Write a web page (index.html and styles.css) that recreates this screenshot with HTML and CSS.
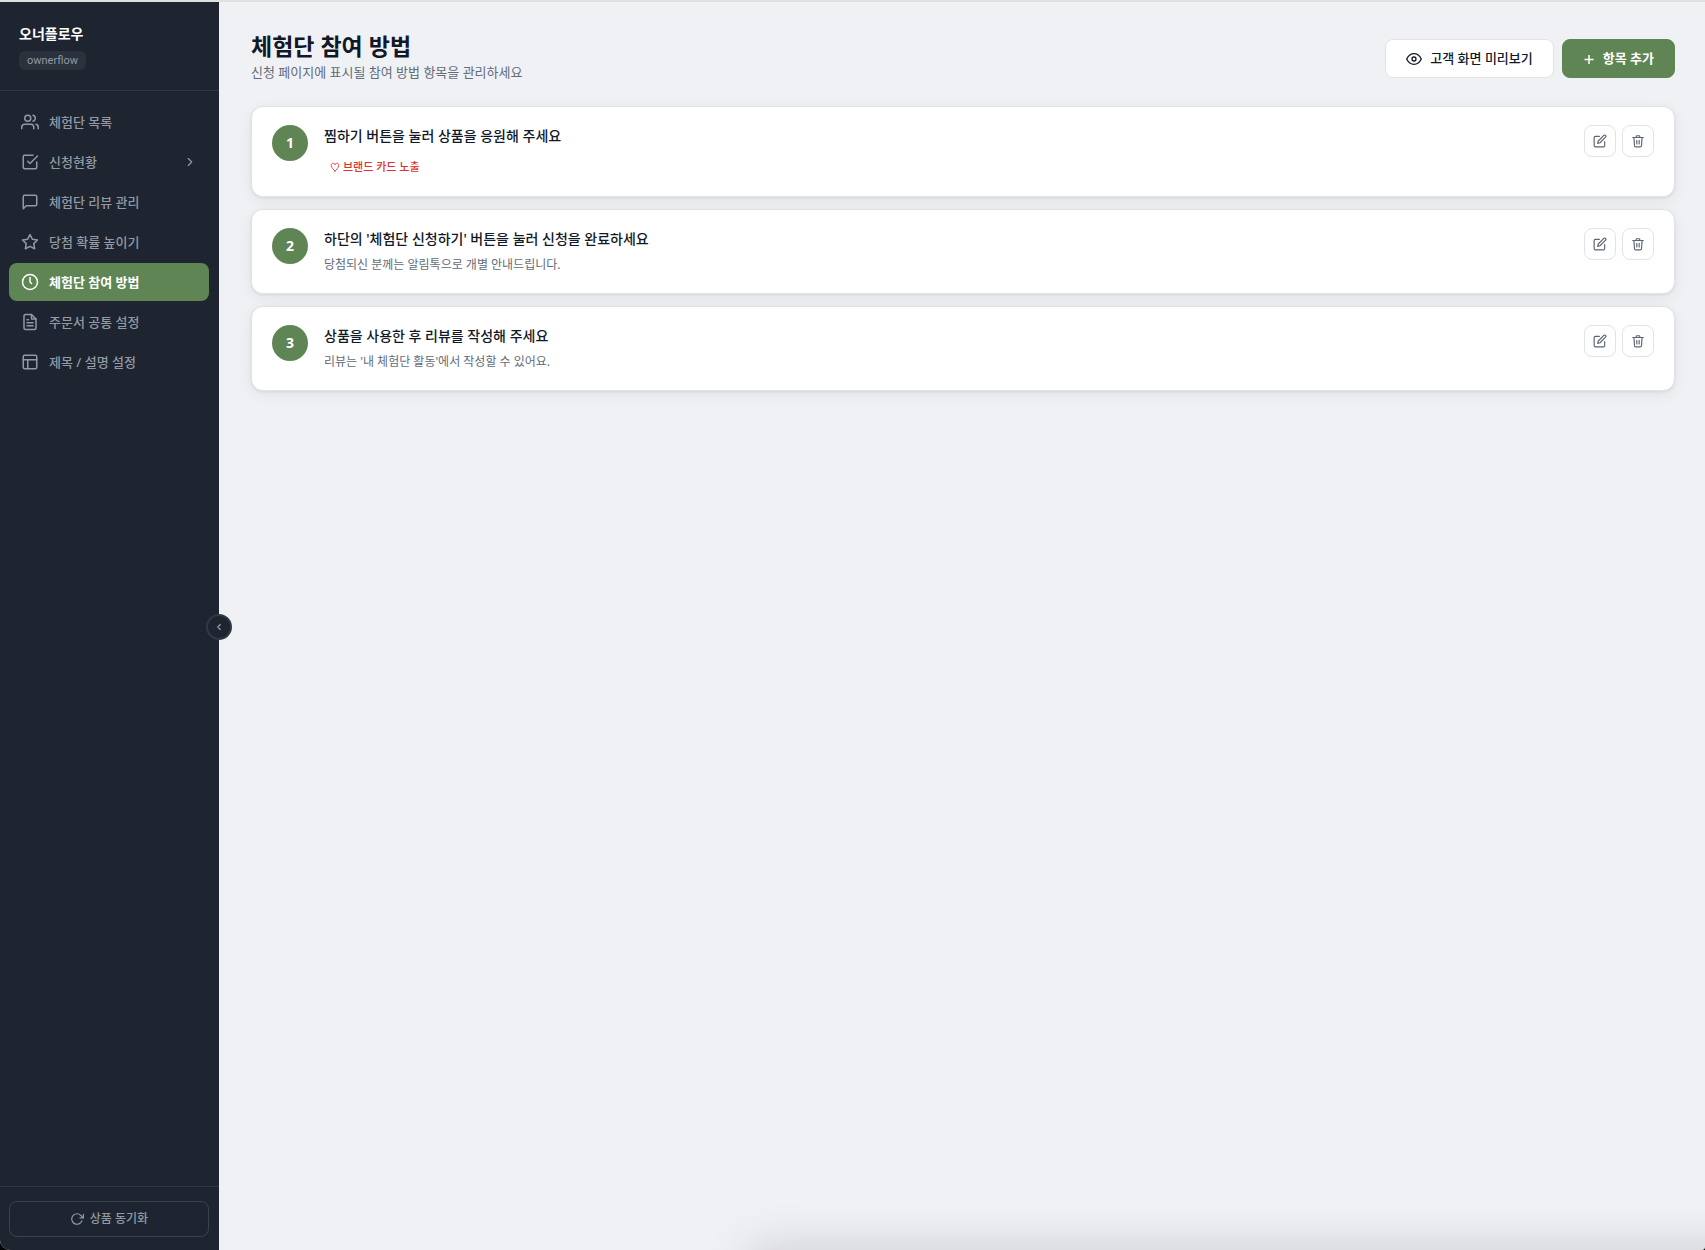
FILE: index.html
```html
<!DOCTYPE html>
<html lang="ko">
<head>
<meta charset="utf-8">
<meta name="viewport" content="width=device-width, initial-scale=1">
<title>체험단 참여 방법</title>
<link rel="stylesheet" href="styles.css">
</head>
<body>
<svg class="sprite" aria-hidden="true">
  <symbol id="i-edit" viewBox="0 0 24 24"><path d="M11 4H4a2 2 0 0 0-2 2v14a2 2 0 0 0 2 2h14a2 2 0 0 0 2-2v-7"/><path d="M18.500 2.500a2.121 2.121 0 0 1 3 3L12 15l-4 1 1-4 9.500-9.500z"/></symbol>
  <symbol id="i-trash" viewBox="0 0 24 24"><path d="M3 6h18M19 6l-1 14a2 2 0 0 1-2 2H8a2 2 0 0 1-2-2L5 6M10 11v6M14 11v6M9 6V4a1 1 0 0 1 1-1h4a1 1 0 0 1 1 1v2"/></symbol>
</svg>
<div class="app">
  <aside class="sidebar">
    <div class="brand">
      <strong class="brand-name">오너플로우</strong>
      <span class="brand-tag">ownerflow</span>
    </div>
    <nav class="nav">
      <a class="nav-item" href="#"><svg class="icon" viewBox="0 0 24 24"><path d="M17 21v-2a4 4 0 0 0-4-4H5a4 4 0 0 0-4 4v2"/><circle cx="9" cy="7" r="4"/><path d="M23 21v-2a4 4 0 0 0-3-3.870M16 3.130a4 4 0 0 1 0 7.750"/></svg><span class="label">체험단 목록</span></a>
      <a class="nav-item" href="#"><svg class="icon" viewBox="0 0 24 24"><path d="M9 11l3 3L22 4"/><path d="M21 12v7a2 2 0 0 1-2 2H5a2 2 0 0 1-2-2V5a2 2 0 0 1 2-2h11"/></svg><span class="label">신청현황</span><svg class="chevron" viewBox="0 0 24 24"><path d="M9 18l6-6-6-6"/></svg></a>
      <a class="nav-item" href="#"><svg class="icon" viewBox="0 0 24 24"><path d="M21 15a2 2 0 0 1-2 2H7l-4 4V5a2 2 0 0 1 2-2h14a2 2 0 0 1 2 2z"/></svg><span class="label">체험단 리뷰 관리</span></a>
      <a class="nav-item" href="#"><svg class="icon" viewBox="0 0 24 24"><path d="M12 2l3.090 6.260L22 9.270l-5 4.870 1.180 6.880L12 17.770l-6.180 3.250L7 14.140 2 9.270l6.910-1.010L12 2z"/></svg><span class="label">당첨 확률 높이기</span></a>
      <a class="nav-item active" href="#" aria-current="page"><svg class="icon" viewBox="0 0 24 24"><circle cx="12" cy="12" r="10"/><path d="M12 6v6l2 2"/></svg><span class="label">체험단 참여 방법</span></a>
      <a class="nav-item" href="#"><svg class="icon" viewBox="0 0 24 24"><path d="M14 2H6a2 2 0 0 0-2 2v16a2 2 0 0 0 2 2h12a2 2 0 0 0 2-2V8z"/><path d="M14 2v6h6M16 13H8M16 17H8M10 9H8"/></svg><span class="label">주문서 공통 설정</span></a>
      <a class="nav-item" href="#"><svg class="icon" viewBox="0 0 24 24"><rect x="3" y="3" width="18" height="18" rx="2"/><path d="M3 9h18M9 21V9"/></svg><span class="label">제목 / 설명 설정</span></a>
    </nav>
    <div class="sidebar-foot">
      <button class="sync" type="button"><svg class="icon-sm" viewBox="0 0 24 24"><path d="M23 4v6h-6"/><path d="M20.490 15a9 9 0 1 1-2.120-9.360L23 10"/></svg><span class="label">상품 동기화</span></button>
    </div>
    <button class="collapse" type="button" aria-label="메뉴 접기"><svg viewBox="0 0 24 24"><path d="M15 18l-6-6 6-6"/></svg></button>
  </aside>
  <main class="main">
    <header class="page-head">
      <div>
        <h1>체험단 참여 방법</h1>
        <p class="subtitle">신청 페이지에 표시될 참여 방법 항목을 관리하세요</p>
      </div>
      <div class="head-actions">
        <button class="btn btn-outline" type="button"><svg viewBox="0 0 24 24"><path d="M1 12s4-8 11-8 11 8 11 8-4 8-11 8-11-8-11-8z"/><circle cx="12" cy="12" r="3"/></svg><span class="label">고객 화면 미리보기</span></button>
        <button class="btn btn-primary" type="button"><svg class="plus" viewBox="0 0 12 12"><path d="M6 2v9M1.500 6.500h9"/></svg><span class="label">항목 추가</span></button>
      </div>
    </header>
    <ol class="steps">
      <li class="card">
        <span class="num">1</span>
        <div class="body">
          <h2>찜하기 버튼을 눌러 상품을 응원해 주세요</h2>
          <span class="badge"><svg viewBox="0 0 24 24"><path d="M12 22C9 18 3 14 3 8c0-3 2-5 4.500-5S12 5 12 7c0-2 2-4 4.500-4S21 5 21 8c0 6-6 10-9 14z"/></svg>브랜드 카드 노출</span>
        </div>
        <div class="tools">
          <button class="tool" type="button" aria-label="수정"><svg><use href="#i-edit"/></svg></button>
          <button class="tool" type="button" aria-label="삭제"><svg><use href="#i-trash"/></svg></button>
        </div>
      </li>
      <li class="card">
        <span class="num">2</span>
        <div class="body">
          <h2>하단의 '체험단 신청하기' 버튼을 눌러 신청을 완료하세요</h2>
          <p>당첨되신 분께는 알림톡으로 개별 안내드립니다.</p>
        </div>
        <div class="tools">
          <button class="tool" type="button" aria-label="수정"><svg><use href="#i-edit"/></svg></button>
          <button class="tool" type="button" aria-label="삭제"><svg><use href="#i-trash"/></svg></button>
        </div>
      </li>
      <li class="card">
        <span class="num">3</span>
        <div class="body">
          <h2>상품을 사용한 후 리뷰를 작성해 주세요</h2>
          <p>리뷰는 '내 체험단 활동'에서 작성할 수 있어요.</p>
        </div>
        <div class="tools">
          <button class="tool" type="button" aria-label="수정"><svg><use href="#i-edit"/></svg></button>
          <button class="tool" type="button" aria-label="삭제"><svg><use href="#i-trash"/></svg></button>
        </div>
      </li>
    </ol>
  </main>
  <div class="edge-shadow" aria-hidden="true"></div>
</div>
</body>
</html>
```
FILE: styles.css
```css
* { box-sizing: border-box; }

html { background: #000; }

body,
button {
  font-family: "Noto Sans", "Noto Sans CJK KR", sans-serif;
}

body {
  margin: 0;
  color: #111827;
}

h1, h2, p, ol { margin: 0; padding: 0; }

svg {
  fill: none;
  stroke: currentColor;
  stroke-width: 2;
  stroke-linecap: round;
  stroke-linejoin: round;
  flex: none;
}

.sprite { display: none; }

/* Optical centring of Hangul beside icons */
.label { padding-bottom: 2px; }

.app {
  position: relative;
  display: flex;
  min-height: 100vh;
  border-top: 2px solid #dfe1e0;
  border-radius: 0 0 3px 10px;
  background: #f0f1f5;
  overflow: hidden;
}

/* Sidebar */
.sidebar {
  position: relative;
  display: flex;
  flex-direction: column;
  flex: none;
  width: 219px;
  background: #1e2530;
  color: #9299a5;
}

.brand {
  display: flex;
  flex-direction: column;
  align-items: flex-start;
  gap: 6px;
  padding: 21px 19px 20px;
  border-bottom: 1px solid #303742;
}

.brand-name {
  color: #fff;
  font-size: 14px;
  line-height: 22px;
}

.brand-tag {
  padding: 0 8px;
  border-radius: 6px;
  background: #2b323c;
  font-family: Roboto, "Noto Sans", sans-serif;
  font-size: 11px;
  line-height: 19px;
}

.nav {
  display: flex;
  flex-direction: column;
  flex: 1;
  gap: 2px;
  padding: 12px 10px 12px 9px;
}

.nav-item {
  display: flex;
  align-items: center;
  gap: 10px;
  height: 38px;
  padding: 0 12px;
  border-radius: 8px;
  color: inherit;
  font-size: 13px;
  font-weight: 500;
  text-decoration: none;
}

.nav-item.active {
  background: #608554;
  color: #fff;
  font-weight: 700;
}

.icon {
  width: 18px;
  height: 18px;
}

.icon-sm {
  width: 14px;
  height: 14px;
}

.chevron {
  width: 14px;
  height: 14px;
  margin-left: auto;
}

.sidebar-foot {
  padding: 14px 10px 13px 9px;
  border-top: 1px solid #303742;
}

.sync {
  display: flex;
  align-items: center;
  justify-content: center;
  gap: 6px;
  width: 100%;
  height: 36px;
  border: 1px solid #3b424c;
  border-radius: 8px;
  background: transparent;
  color: inherit;
  font-size: 12px;
  font-weight: 500;
}

.collapse {
  position: absolute;
  top: 50%;
  right: -13px;
  display: grid;
  place-items: center;
  width: 26px;
  height: 26px;
  margin-top: -12px;
  padding: 0;
  border: 2px solid #303a47;
  border-radius: 50%;
  background: #1e2530;
  color: #9299a5;
}

.collapse svg {
  width: 10px;
  height: 10px;
  stroke-width: 3;
}

/* Main */
.main {
  flex: 1;
  min-width: 0;
  padding: 28px 30px 40px 32px;
}

.page-head {
  display: flex;
  align-items: center;
  justify-content: space-between;
  margin-bottom: 19px;
}

h1 {
  font-size: 23px;
  line-height: 32px;
}

.subtitle {
  margin-bottom: 5px;
  color: #636b79;
  font-size: 13px;
  line-height: 20px;
}

.head-actions {
  display: flex;
  gap: 8px;
}

.btn {
  display: flex;
  align-items: center;
  justify-content: center;
  gap: 8px;
  height: 39px;
  padding: 0 20px;
  border: 1px solid #e1e3e8;
  border-radius: 8px;
  font-size: 13px;
}

.btn svg {
  width: 16px;
  height: 16px;
}

.btn-outline {
  background: #fff;
  color: #111827;
  font-weight: 500;
}

.btn-primary {
  border-color: #608554;
  background: #608554;
  color: #fff;
  font-weight: 700;
}

.btn .plus {
  width: 12px;
  height: 12px;
  stroke-width: 1.500;
  stroke-linecap: butt;
}

.steps {
  display: flex;
  flex-direction: column;
  gap: 12px;
  list-style: none;
}

.card {
  display: flex;
  align-items: flex-start;
  gap: 16px;
  padding: 18px 20px;
  border: 1px solid #e1e3e8;
  border-radius: 12px;
  background: #fff;
  box-shadow: 0 1px 3px rgba(0, 0, 0, 0.08), 0 4px 16px rgba(0, 0, 0, 0.06);
}

.num {
  display: grid;
  place-items: center;
  flex: none;
  width: 36px;
  height: 36px;
  padding-bottom: 2px;
  border-radius: 50%;
  background: #608554;
  color: #fff;
  font-size: 14px;
  font-weight: 700;
}

.body {
  display: flex;
  flex-direction: column;
  align-items: flex-start;
  flex: 1;
  gap: 6px;
}

h2 {
  font-size: 14px;
  font-weight: 500;
  line-height: 21px;
}

.body p {
  color: #636b79;
  font-size: 12px;
  line-height: 20px;
}

.badge {
  display: flex;
  align-items: center;
  gap: 3px;
  margin-top: 4px;
  padding: 0 6px;
  color: #e03131;
  font-size: 11px;
  font-weight: 500;
  line-height: 22px;
}

.badge svg {
  width: 10px;
  height: 10px;
}

.tools {
  display: flex;
  gap: 6px;
}

.tool {
  display: grid;
  place-items: center;
  width: 32px;
  height: 32px;
  padding: 0;
  border: 1px solid #e1e3e8;
  border-radius: 8px;
  background: #fff;
  color: #5d6573;
}

.tool svg {
  width: 14px;
  height: 14px;
}

/* Soft shade rising from the lower edge */
.edge-shadow {
  position: absolute;
  top: 100%;
  right: -60px;
  left: 44%;
  height: 60px;
  box-shadow: 0 0 50px rgba(0, 0, 0, 0.16);
  pointer-events: none;
}
```
